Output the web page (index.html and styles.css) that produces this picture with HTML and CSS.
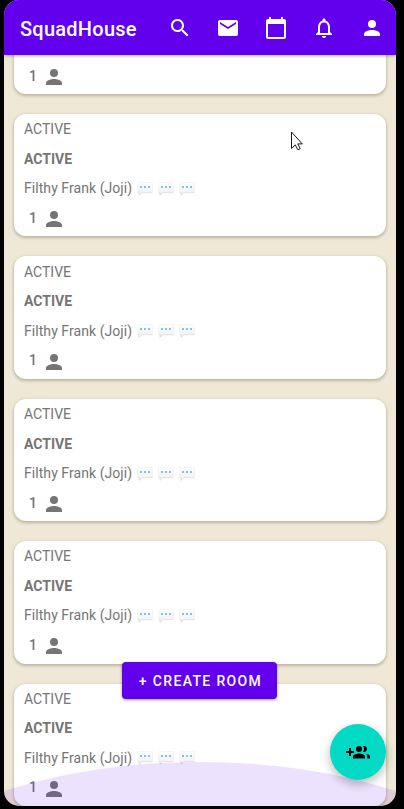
FILE: index.html
```html
<!DOCTYPE html>
<html lang="en">
<head>
<meta charset="utf-8">
<title>SquadHouse</title>
<link rel="stylesheet" href="styles.css">
</head>
<body>
<svg width="0" height="0" class="defs">
  <defs>
    <linearGradient id="shade" x1="0" y1="0" x2="0" y2="1"><stop offset="0" stop-color="#fdfdfd"/><stop offset="1" stop-color="#f0f0f0"/></linearGradient>
    <symbol id="man" viewBox="0 0 24 24"><circle cx="12" cy="8" r="4"/><path d="M12 14c-2.670 0-8 1.340-8 4v2h16v-2c0-2.660-5.330-4-8-4z"/></symbol>
    <symbol id="bubble" viewBox="0 0 16 14"><path d="M1.500 .5h13q1 0 1 1v8q0 1-1 1H5L2 13.500l.2-3h-.7q-1 0-1-1v-8q0-1 1-1z" fill="url(#shade)" stroke="#ededed" stroke-width=".5"/><path d="M.7 10q.3.700 1.100.700h.5L2 13.200l3-2.500h9.500q.8 0 1-.7" fill="none" stroke="#dcdcdc" stroke-width=".8"/><g fill="#80bff0"><rect x="3" y="4" width="2" height="2"/><rect x="7" y="4" width="2" height="2"/><rect x="11" y="4" width="2" height="2"/></g></symbol>
  </defs>
</svg>
<div class="phone">
  <header class="bar">
    <h1>SquadHouse</h1>
    <nav>
      <svg viewBox="0 0 24 24"><path d="M15.500 14h-.79l-.28-.27C15.410 12.590 16 11.110 16 9.500 16 5.910 13.090 3 9.500 3S3 5.910 3 9.500 5.910 16 9.500 16c1.610 0 3.090-.59 4.230-1.570l.27.28v.79l5 4.990L20.490 19l-4.990-5zm-6 0C7.010 14 5 11.990 5 9.500S7.010 5 9.500 5 14 7.010 14 9.500 11.990 14 9.500 14z"/></svg>
      <svg viewBox="0 0 24 24"><path d="M20 4H4c-1.100 0-1.990.9-1.990 2L2 18c0 1.100.9 2 2 2h16c1.100 0 2-.9 2-2V6c0-1.100-.9-2-2-2zm0 4l-8 5-8-5V6l8 5 8-5v2z"/></svg>
      <svg viewBox="0 0 24 24"><path d="M20 3h-1V1h-2v2H7V1H5v2H4c-1.100 0-2 .9-2 2v16c0 1.100.9 2 2 2h16c1.100 0 2-.9 2-2V5c0-1.100-.9-2-2-2zm0 18H4V8h16v13z"/></svg>
      <svg viewBox="0 0 24 24"><path d="M12 22c1.100 0 2-.9 2-2h-4c0 1.100.9 2 2 2zm6-6v-5c0-3.070-1.630-5.640-4.500-6.320V4c0-.83-.67-1.500-1.500-1.500s-1.500.67-1.500 1.500v.68C7.640 5.360 6 7.920 6 11v5l-2 2v1h16v-1l-2-2zm-2 1H8v-6c0-2.480 1.510-4.500 4-4.500s4 2.020 4 4.500v6z"/></svg>
      <svg><use href="#man"/></svg>
    </nav>
  </header>
  <main class="list">
    <article class="card partial"><p class="count">1 <svg><use href="#man"/></svg></p></article>
    <article class="card"><p>ACTIVE</p><p class="strong">ACTIVE</p><p class="host">Filthy Frank (Joji) <svg><use href="#bubble"/></svg><svg><use href="#bubble"/></svg><svg><use href="#bubble"/></svg></p><p class="count">1 <svg><use href="#man"/></svg></p></article>
    <article class="card"><p>ACTIVE</p><p class="strong">ACTIVE</p><p class="host">Filthy Frank (Joji) <svg><use href="#bubble"/></svg><svg><use href="#bubble"/></svg><svg><use href="#bubble"/></svg></p><p class="count">1 <svg><use href="#man"/></svg></p></article>
    <article class="card"><p>ACTIVE</p><p class="strong">ACTIVE</p><p class="host">Filthy Frank (Joji) <svg><use href="#bubble"/></svg><svg><use href="#bubble"/></svg><svg><use href="#bubble"/></svg></p><p class="count">1 <svg><use href="#man"/></svg></p></article>
    <article class="card"><p>ACTIVE</p><p class="strong">ACTIVE</p><p class="host">Filthy Frank (Joji) <svg><use href="#bubble"/></svg><svg><use href="#bubble"/></svg><svg><use href="#bubble"/></svg></p><p class="count">1 <svg><use href="#man"/></svg></p></article>
    <article class="card"><p>ACTIVE</p><p class="strong">ACTIVE</p><p class="host">Filthy Frank (Joji) <svg><use href="#bubble"/></svg><svg><use href="#bubble"/></svg><svg><use href="#bubble"/></svg></p><p class="count">1 <svg><use href="#man"/></svg></p></article>
  </main>
  <svg class="glow" viewBox="0 0 392 44"><path d="M0 29Q90 0 196 0T392 29V44H0z"/></svg>
  <button class="create">+ CREATE ROOM</button>
  <button class="fab" aria-label="Add people">
    <svg viewBox="0 0 24 24"><path d="M3 8h2v3h3v2H5v3H3v-3H0v-2h3z"/><circle cx="13" cy="9" r="3"/><path d="M13 13.500c-2 0-6 1-6 3v2h12v-2c0-2-4-3-6-3zM16.900 11.900c.3.100.7.100 1.100.1 1.660 0 3-1.340 3-3s-1.340-3-3-3c-.4 0-.8.1-1.100.1.700.8 1.100 1.800 1.100 2.900s-.4 2.100-1.100 2.900zM20 14c.9.700 1.200 1.500 1.200 2.500v2H24v-2c0-1.300-2-2.200-4-2.500z"/></svg>
  </button>
  <svg class="cursor" viewBox="0 0 13 20"><path d="M1.500 1v16.500l3.800-3.600 2.500 4.900 2.400-1.200-2.400-4.700h4.500z"/></svg>
</div>
</body>
</html>
```

FILE: styles.css
```css
* { box-sizing: border-box; }
body { margin: 0; background: #000; font-family: Roboto, sans-serif; }
.defs { position: absolute; }
.phone {
  position: relative;
  width: 392px;
  height: 806px;
  margin: 0 4px;
  overflow: hidden;
  border-radius: 15px;
  background: #efe8d6;
  display: flex;
  flex-direction: column;
}
.bar {
  flex: none;
  z-index: 1;
  height: 55px;
  padding: 0 12px 0 16px;
  display: flex;
  align-items: center;
  justify-content: space-between;
  background: #6200ee;
  color: #fff;
  box-shadow: 0 1px 3px rgba(0, 0, 0, .3);
}
.bar h1 { margin: 2px 0 0; font-size: 20px; font-weight: 500; letter-spacing: .25px; }
.bar nav { display: flex; gap: 24px; }
.bar nav svg { width: 24px; height: 24px; fill: #fff; }
.list {
  flex: 1;
  min-height: 0;
  overflow: hidden;
  display: flex;
  flex-direction: column;
  justify-content: flex-end;
  gap: 20px;
  padding: 0 10.500px 0 9.500px;
}
.card {
  flex: none;
  height: 122.4px;
  padding: .5px 10.500px 0;
  border-radius: 12px;
  background: #fff;
  color: #757575;
  box-shadow: 0 1px 3px 1px rgba(70, 60, 25, .16), 0 2px 3px rgba(70, 60, 25, .15);
}
.card.partial { height: 42.4px; padding-top: 9.4px; border-radius: 0 0 12px 12px; }
.card p {
  margin: 0;
  height: 29.5px;
  display: flex;
  align-items: center;
  font-size: 14px;
  white-space: pre;
}
.card .host { letter-spacing: .06px; }
.card .host svg { width: 16px; height: 14px; margin: 1px 5px 0 1px; }
.card .host svg + svg { margin-left: 0; }
.card .strong { font-weight: 700; }
.card .count { padding-left: 5px; font-weight: 500; }
.card .count svg { width: 24px; height: 24px; margin: 3px 0 0 2px; fill: #757575; }
.glow { position: absolute; left: 0; bottom: 0; width: 392px; height: 44px; fill: rgba(98, 0, 238, .115); }
.create, .fab { position: absolute; border: 0; padding: 0; }
.create {
  left: 118px;
  top: 662px;
  width: 155px;
  height: 36.500px;
  border-radius: 4px;
  background: #6200ee;
  color: #fff;
  font: 500 14px Roboto, sans-serif;
  letter-spacing: 1.35px;
  padding: 1px 0 0 2px;
  box-shadow: 0 1px 3px rgba(0, 0, 0, .4);
}
.fab {
  left: 325.500px;
  top: 724px;
  width: 56px;
  height: 56px;
  border-radius: 50%;
  background: #03dac5;
  display: flex;
  align-items: center;
  justify-content: center;
  box-shadow: 0 4px 8px 1px rgba(0, 0, 0, .23);
}
.fab svg { width: 24px; height: 24px; margin: 0 0 1px; }
.cursor { position: absolute; left: 286px; top: 131px; width: 13px; height: 20px; fill: #fff; stroke: #16161e; stroke-width: 1; }
```
